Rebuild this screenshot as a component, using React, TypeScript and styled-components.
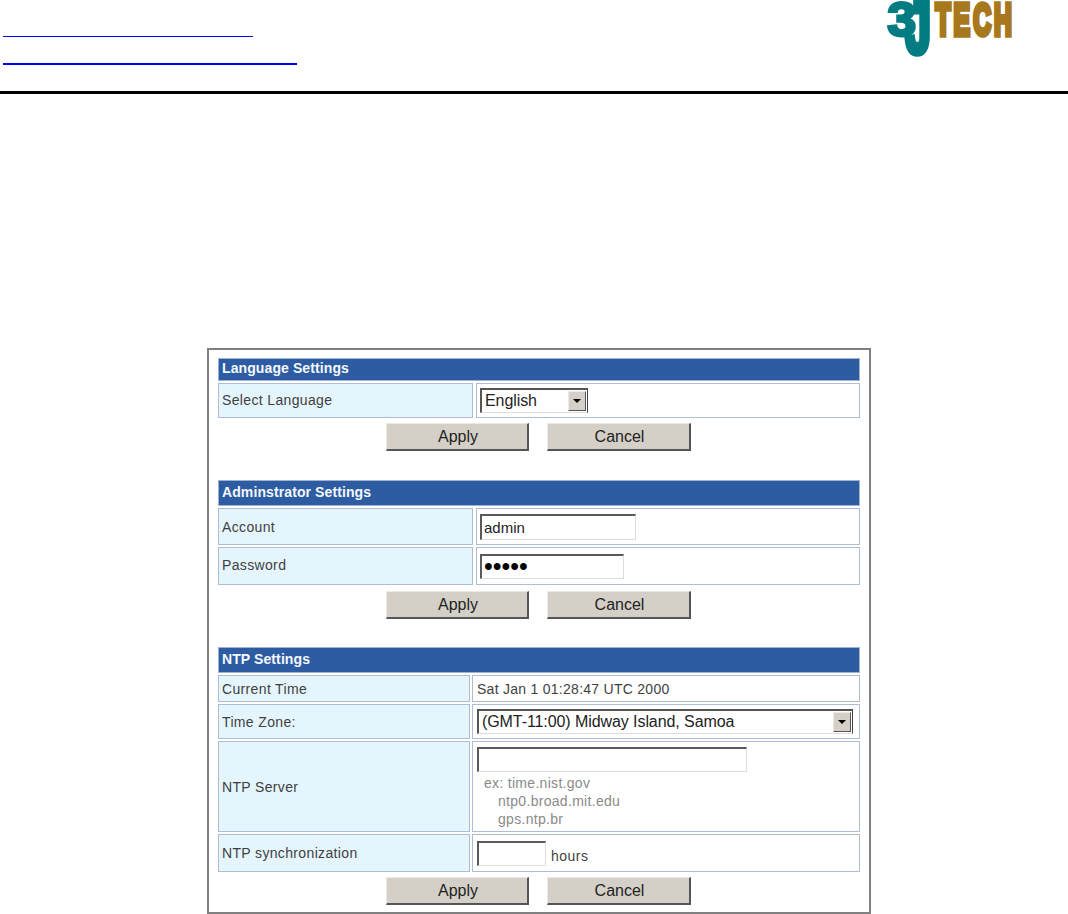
import React from "react";
import styled, { createGlobalStyle } from "styled-components";

const Global = createGlobalStyle`
  html, body { margin: 0; padding: 0; background: #fff; }
  body { font-family: "Liberation Sans", Arial, sans-serif; color: #333; }
  * { box-sizing: border-box; }
`;

const Page = styled.div`
  width: 1068px;
  height: 914px;
  overflow: hidden;
`;

const Header = styled.header`
  height: 94px;
  display: flex;
  justify-content: space-between;
  align-items: flex-start;
  border-bottom: 3px solid #000;
  padding: 0 55px 0 3px;
`;

const LinkStack = styled.nav`
  display: flex;
  flex-direction: column;
  gap: 26px;
  margin-top: 36px;
`;

const BlankLink = styled.a<{ $w: number; $t: number }>`
  display: block;
  width: ${(p) => p.$w}px;
  border-bottom: ${(p) => p.$t}px solid #0000ff;
`;

const LogoSvg = styled.svg`
  display: block;
  overflow: visible;
  text {
    vector-effect: non-scaling-stroke;
    stroke-linejoin: miter;
  }
`;

const Panel = styled.main`
  width: 664px;
  height: 566px;
  margin: 254px 0 0 207px;
  border: 2px solid #808080;
  padding: 8px 9px 0 9px;
  display: flex;
  flex-direction: column;
  gap: 28px;
`;

const Section = styled.section<{ $after?: number }>`
  display: flex;
  flex-direction: column;
  gap: 2px;
  margin-bottom: ${(p) => p.$after ?? 0}px;
`;

const SectionTitle = styled.h2<{ $h: number; $lift: number }>`
  margin: 0;
  height: ${(p) => p.$h}px;
  display: flex;
  align-items: center;
  padding: 0 0 ${(p) => p.$lift}px 3px;
  background: #2d5ca3;
  border: 1px solid #9fb3d1;
  color: #f4f8fc;
  font-size: 14px;
  font-weight: 700;
  letter-spacing: 0.1px;
`;

const Row = styled.div<{ $h: number; $label: number; $gap: number }>`
  display: grid;
  grid-template-columns: ${(p) => p.$label}px 1fr;
  column-gap: ${(p) => p.$gap}px;
  height: ${(p) => p.$h}px;
`;

const Label = styled.div<{ $lift?: number }>`
  display: flex;
  align-items: center;
  padding: 0 0 ${(p) => p.$lift ?? 0}px 3px;
  background: #e5f5fe;
  border: 1px solid #aebcd4;
  font-size: 14px;
  letter-spacing: 0.35px;
  color: #3f3f3f;
`;

const Value = styled.div<{ $pad: number }>`
  display: flex;
  align-items: center;
  padding-left: ${(p) => p.$pad}px;
  background: #fff;
  border: 1px solid #aebcd4;
  font-size: 14px;
  letter-spacing: 0.27px;
  color: #3f3f3f;
`;

const ValueStack = styled(Value)`
  flex-direction: column;
  align-items: flex-start;
  padding-top: 5px;
`;

const Dropdown = styled.div<{ $w: number; $h: number }>`
  width: ${(p) => p.$w}px;
  height: ${(p) => p.$h}px;
  display: flex;
  align-items: center;
  justify-content: space-between;
  padding: 0 1px 1px 3px;
  border-style: solid;
  border-width: 2px 1px 1px 2px;
  border-color: #555 #444 #ddd #555;
  font-size: 16px;
  letter-spacing: -0.08px;
  color: #222;
  background: #fff;
`;

const DropButton = styled.span`
  width: 18px;
  height: 20px;
  display: flex;
  align-items: center;
  justify-content: center;
  background: #d4d0c8;
  border: 1px solid;
  border-color: #eeeae3 #555 #555 #eeeae3;
  &::after {
    content: "";
    border-style: solid;
    border-width: 4px 4px 0 4px;
    border-color: #000 transparent transparent transparent;
  }
`;

const Field = styled.input<{ $w: number; $h: number }>`
  display: block;
  width: ${(p) => p.$w}px;
  height: ${(p) => p.$h}px;
  padding: 0 2px;
  border-style: solid;
  border-width: 2px 1px 1px 2px;
  border-color: #5a5a5a #ddd #ddd #5a5a5a;
  outline: none;
  background: #fff;
  font-family: "Liberation Sans", Arial, sans-serif;
  font-size: 15px;
  color: #222;
`;

const SecretField = styled(Field)`
  font-size: 25px;
  color: #000;
`;

const Hints = styled.div`
  margin: 2px 0 0 7px;
  font-size: 14px;
  line-height: 18px;
  letter-spacing: 0.3px;
  color: #8a8a8a;
`;

const HintLine = styled.div<{ $indent?: boolean }>`
  padding-left: ${(p) => (p.$indent ? 14 : 0)}px;
`;

const Unit = styled.span`
  margin: 5px 0 0 5px;
  font-size: 14px;
  letter-spacing: 0.5px;
`;

const Buttons = styled.div<{ $top: number }>`
  display: flex;
  justify-content: center;
  gap: 18px;
  margin-top: ${(p) => p.$top}px;
  padding-right: 1px;
`;

const Button = styled.button<{ $w: number }>`
  width: ${(p) => p.$w}px;
  height: 28px;
  padding: 0 0 0 2px;
  background: #d4d0c8;
  border-style: solid;
  border-width: 1px 2px 2px 1px;
  border-color: #ece9e2 #555 #555 #ece9e2;
  font-family: "Liberation Sans", Arial, sans-serif;
  font-size: 16px;
  color: #222;
`;

const Logo = () => (
  <LogoSvg width="126" height="57" viewBox="0 0 126 57">
    <g fontFamily="'Liberation Sans', Arial, sans-serif" fontWeight="700">
      <text transform="translate(19 53) scale(0.62 1)" fontSize="72" fill="#007c82" stroke="#007c82" strokeWidth="5.5">J</text>
      <text transform="translate(0.5 36) scale(1.05 1)" fontSize="49" fill="#007c82" stroke="#007c82" strokeWidth="3">3</text>
      <text transform="translate(48.5 34.7) scale(0.56 1)" fontSize="44" letterSpacing="5.5" fill="#a8781c" stroke="#a8781c" strokeWidth="4.5">TECH</text>
    </g>
  </LogoSvg>
);

const ActionRow = ({ top }: { top: number }) => (
  <Buttons $top={top}>
    <Button type="button" $w={143}>Apply</Button>
    <Button type="button" $w={144}>Cancel</Button>
  </Buttons>
);

export default function App() {
  return (
    <Page>
      <Global />
      <Header>
        <LinkStack>
          <BlankLink href="#" $w={250} $t={1} aria-label="link one" />
          <BlankLink href="#" $w={294} $t={2} aria-label="link two" />
        </LinkStack>
        <Logo />
      </Header>
      <Panel>
        <Section $after={1}>
          <SectionTitle $h={23} $lift={4}>Language Settings</SectionTitle>
          <Row $h={35} $label={255} $gap={3}>
            <Label $lift={2}>Select Language</Label>
            <Value $pad={3}>
              <Dropdown $w={108} $h={25}>
                English
                <DropButton />
              </Dropdown>
            </Value>
          </Row>
          <ActionRow top={3} />
        </Section>
        <Section>
          <SectionTitle $h={26} $lift={2}>Adminstrator Settings</SectionTitle>
          <Row $h={37} $label={255} $gap={3}>
            <Label>Account</Label>
            <Value $pad={3}>
              <Field $w={156} $h={26} defaultValue="admin" />
            </Value>
          </Row>
          <Row $h={38} $label={255} $gap={3}>
            <Label $lift={2}>Password</Label>
            <Value $pad={3}>
              <SecretField $w={144} $h={25} type="password" defaultValue="admin" />
            </Value>
          </Row>
          <ActionRow top={4} />
        </Section>
        <Section>
          <SectionTitle $h={26} $lift={2}>NTP Settings</SectionTitle>
          <Row $h={27} $label={252} $gap={2}>
            <Label>Current Time</Label>
            <Value $pad={4}>Sat Jan 1 01:28:47 UTC 2000</Value>
          </Row>
          <Row $h={35} $label={252} $gap={2}>
            <Label>Time Zone:</Label>
            <Value $pad={4}>
              <Dropdown $w={376} $h={25}>
                (GMT-11:00) Midway Island, Samoa
                <DropButton />
              </Dropdown>
            </Value>
          </Row>
          <Row $h={91} $label={252} $gap={2}>
            <Label>NTP Server</Label>
            <ValueStack $pad={4}>
              <Field $w={270} $h={25} />
              <Hints>
                <HintLine>ex: time.nist.gov</HintLine>
                <HintLine $indent>ntp0.broad.mit.edu</HintLine>
                <HintLine $indent>gps.ntp.br</HintLine>
              </Hints>
            </ValueStack>
          </Row>
          <Row $h={38} $label={252} $gap={2}>
            <Label>NTP synchronization</Label>
            <Value $pad={4}>
              <Field $w={69} $h={25} />
              <Unit>hours</Unit>
            </Value>
          </Row>
          <ActionRow top={3} />
        </Section>
      </Panel>
    </Page>
  );
}
